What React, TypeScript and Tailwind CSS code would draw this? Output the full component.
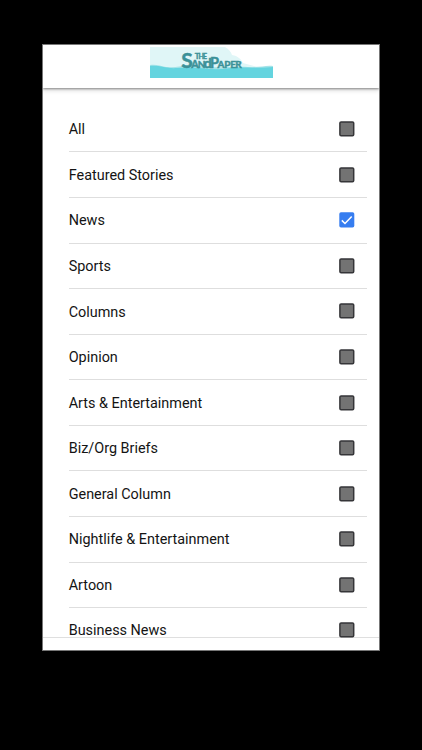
import React, { useState } from 'react';

const categories = [
  'All', 'Featured Stories', 'News', 'Sports', 'Columns', 'Opinion',
  'Arts & Entertainment', 'Biz/Org Briefs', 'General Column',
  'Nightlife & Entertainment', 'Artoon', 'Business News',
];

function Logo() {
  return (
    <svg width="123" height="31" viewBox="0 0 123 31" role="img" aria-label="The SandPaper">
      <path d="M0 0H75C79 2 81 5 82 8C88 9 91 12 93 16C100 18 107 20 116 21H0Z" fill="#e0f6f7" />
      <path d="M0 18C6 17 10 19 16 20C27 21 38 17 50 19C67 22 82 19 98 20C109 21 115 18 123 19V31H0Z" fill="#a5e3e8" />
      <path d="M0 19C10 18 17 22 27 21C43 19 57 23 74 22C91 19 107 22 123 20V31H0Z" fill="#64d4df" />
      <g fill="#3b9198" stroke="#3b9198" strokeWidth="0.5" fontFamily="Lato, 'Liberation Sans', sans-serif" fontWeight="700">
        <text y="21.2">
          <tspan x="31.3" fontSize="21">S</tspan>
          <tspan x="41.2" fontSize="10.5">A</tspan>
          <tspan x="47.8" fontSize="10">N</tspan>
          <tspan x="53.8" fontSize="14">d</tspan>
          <tspan x="60" fontSize="14.5">P</tspan>
          <tspan x="67.4 74.3 80.3 85.2" fontSize="10">APER</tspan>
        </text>
        <text y="11.8" fontSize="8" strokeWidth="0.35">
          <tspan x="44.8">T</tspan>
          <tspan x="48.6 53" fontSize="7">HE</tspan>
        </text>
      </g>
    </svg>
  );
}

function CheckBox({ checked }: { checked: boolean }) {
  return (
    <svg width="16" height="16" viewBox="0 0 16 16" className="shrink-0" aria-hidden="true">
      {checked ? (
        <>
          <rect x="0.3" y="0.3" width="15" height="15.2" rx="1.7" fill="#367df0" />
          <path d="M2.8 8.4L6 11.5L12.7 4.5" fill="none" stroke="#fff" strokeWidth="1.5" />
        </>
      ) : (
        <rect x="0.9" y="0.9" width="13.8" height="13.8" rx="1.2" fill="#737373" stroke="#353538" strokeWidth="1.5" />
      )}
    </svg>
  );
}

export default function App() {
  const [selected, setSelected] = useState<string[]>(['News']);
  const toggle = (name: string) =>
    setSelected((s) => (s.includes(name) ? s.filter((n) => n !== name) : [...s, name]));

  return (
    <div className="flex h-[750px] w-[422px] justify-center overflow-hidden bg-black pt-[44px] font-['Roboto','Liberation_Sans',sans-serif]">
      <main className="relative flex h-[607px] w-[338px] flex-col overflow-hidden border border-[#777] bg-white">
        <header className="z-10 flex h-[43px] shrink-0 justify-center bg-white pt-[2px] shadow-[0_1px_2px_rgba(0,0,0,0.4),0_3px_4px_rgba(0,0,0,0.12)]">
          <Logo />
        </header>
        <ul className="mt-[18.9px] ml-[25.7px] mr-[12px]">
          {categories.map((name) => (
            <li key={name} className="h-[45.57px] border-b border-[#dedede]">
              <button
                type="button"
                role="checkbox"
                aria-checked={selected.includes(name)}
                onClick={() => toggle(name)}
                className="flex h-full w-full items-center justify-between pr-[12px] text-left text-[14.42px] text-[#141414]"
              >
                <span className="pt-[1.8px]">{name}</span>
                <CheckBox checked={selected.includes(name)} />
              </button>
            </li>
          ))}
        </ul>
        <footer className="absolute inset-x-0 bottom-0 h-[13px] border-t border-[#00000020]" />
      </main>
    </div>
  );
}
